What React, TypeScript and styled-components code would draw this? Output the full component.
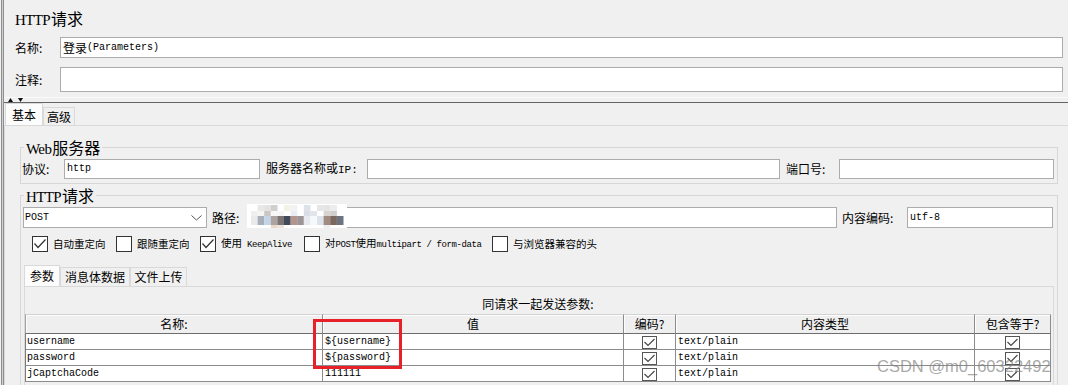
import React from "react";
import styled, { createGlobalStyle } from "styled-components";

const CJK = `"Noto Sans CJK SC", "Noto Sans", sans-serif`;
const MONO = `"Liberation Mono", "DejaVu Sans Mono", monospace`;
const SERIF = `"Liberation Serif", serif`;

const Global = createGlobalStyle`
  html, body { margin: 0; padding: 0; background: #f0f0f0; }
  body { font-family: ${CJK}; color: #000; }
  * { box-sizing: border-box; }
`;

const Page = styled.div`
  position: relative;
  width: 1068px;
  height: 385px;
  overflow: hidden;
  display: flex;
  background: #f0f0f0;
`;

const Gutter = styled.div`
  flex: none;
  margin-left: 1px;
  width: 3px;
  border-left: 1px solid #8f8f8f;
  border-right: 1px solid #8f8f8f;
  background: #cfcfcf;
`;

const Main = styled.div`
  flex: 1;
  min-width: 0;
  display: flex;
  flex-direction: column;
`;

const Header = styled.div`
  padding: 8px 5px 0 11px;
`;

const Title = styled.div`
  height: 20px;
  font-size: 16px;
  line-height: 20px;
`;

const SerifLatin = styled.span`
  font-family: ${SERIF};
  font-size: 15px;
  letter-spacing: -0.6px;
  margin-right: 1px;
`;

const Mono = styled.span<{ $size?: number; $ls?: number }>`
  font-family: ${MONO};
  font-size: ${(p) => p.$size ?? 10}px;
  letter-spacing: ${(p) => p.$ls ?? 0}px;
`;

const FieldRow = styled.div`
  display: flex;
  align-items: center;
  margin-top: 9px;
`;

const FieldLabel = styled.div`
  flex: none;
  width: 45px;
  font-size: 12px;
  line-height: 14px;
`;

const TextBox = styled.div<{ $h: number; $w?: number }>`
  position: relative;
  flex: ${(p) => (p.$w ? "none" : "1")};
  width: ${(p) => (p.$w ? `${p.$w}px` : "auto")};
  min-width: 0;
  height: ${(p) => p.$h}px;
  border: 1px solid #acacac;
  background: #fff;
  padding-left: 2px;
  display: flex;
  align-items: center;
  font-size: 12px;
  line-height: 14px;
  white-space: nowrap;
`;

const Splitter = styled.div`
  margin-top: 5px;
  height: 6px;
  border-top: 1px solid #fbfbfb;
  border-bottom: 1px solid #646464;
  padding-left: 4px;
  display: flex;
  align-items: center;
  gap: 5px;
`;

const TabStrip = styled.div<{ $h: number; $indent: number }>`
  display: flex;
  align-items: flex-end;
  height: ${(p) => p.$h}px;
  padding-left: ${(p) => p.$indent}px;
`;

const Tab = styled.div<{ $active?: boolean; $w: number; $h: number }>`
  flex: none;
  width: ${(p) => p.$w}px;
  height: ${(p) => p.$h}px;
  display: flex;
  align-items: center;
  justify-content: center;
  font-size: 12px;
  line-height: 14px;
  background: ${(p) => (p.$active ? "#fcfcfc" : "#f0f0f0")};
  border: 1px solid #d9d9d9;
  border-bottom: none;
`;

const TabPanel = styled.div`
  flex: 1;
  border-top: 1px solid #d9d9d9;
  border-left: 1px solid #d9d9d9;
  padding: 13px 10px 0 15px;
`;

const Group = styled.fieldset<{ $gap?: number }>`
  margin: ${(p) => p.$gap ?? 0}px 0 0 0;
  padding: 4px 3px 4px 1px;
  border: 1px solid #d7d7d7;
  min-width: 0;
`;

const Legend = styled.legend`
  margin-left: 2px;
  padding: 0 2px;
  font-size: 16px;
  line-height: 16px;
  height: 16px;
`;

const Row = styled.div<{ $h: number; $pl?: number }>`
  display: flex;
  align-items: center;
  height: ${(p) => p.$h}px;
  padding-left: ${(p) => p.$pl ?? 0}px;
  padding-right: ${(p) => (p.$pl ? 1 : 0)}px;
`;

const Label = styled.div<{ $w: number; $lead?: number }>`
  flex: none;
  width: ${(p) => p.$w}px;
  margin-left: ${(p) => p.$lead ?? 0}px;
  font-size: 12px;
  line-height: 14px;
  white-space: nowrap;
`;

const Combo = styled.div`
  flex: none;
  width: 184px;
  height: 21px;
  border: 1px solid #acacac;
  background: #fff;
  display: flex;
  align-items: center;
  justify-content: space-between;
  padding: 0 4px 0 1px;
`;

const CheckRow = styled.div`
  display: flex;
  align-items: center;
  height: 16px;
  margin-top: 8px;
  padding-left: 10px;
`;

const CheckItem = styled.div<{ $w?: number }>`
  flex: none;
  width: ${(p) => (p.$w ? `${p.$w}px` : "auto")};
  display: flex;
  align-items: center;
  gap: 5px;
  font-size: 10.5px;
  line-height: 14px;
  white-space: nowrap;
`;

const Box = styled.div`
  flex: none;
  width: 16px;
  height: 16px;
  border: 1px solid #333;
  background: #fff;
  display: flex;
  align-items: center;
  justify-content: center;
`;

const SubTabs = styled.div`
  margin-top: 13px;
`;

const SubPanel = styled.div`
  margin-left: 2px;
  border-top: 1px solid #d9d9d9;
  border-left: 1px solid #d9d9d9;
  border-right: 1px solid #d9d9d9;
  height: 120px;
`;

const Caption = styled.div`
  width: 1026px;
  height: 27px;
  padding-top: 8px;
  text-align: center;
  font-size: 12px;
  line-height: 17px;
`;

const Table = styled.table`
  width: 1026px;
  table-layout: fixed;
  border-collapse: separate;
  border-spacing: 0;
  background: #fff;
`;

const Th = styled.th`
  height: 20px;
  padding: 0;
  background: #efefef;
  font-weight: normal;
  font-size: 12px;
  line-height: 14px;
  border-top: 1px solid #d2d2d2;
  border-bottom: 1px solid #6e6e6e;
  border-right: 1px solid #8c8c8c;
  box-shadow: inset 1px 1px #fdfdfd;
  &:first-child {
    border-left: 1px solid #a0a0a0;
  }
`;

const Td = styled.td<{ $center?: boolean }>`
  height: 16px;
  padding: 0 2px;
  border-bottom: 1px solid #8c8c8c;
  border-right: 1px solid #8c8c8c;
  font-family: ${MONO};
  font-size: 10px;
  line-height: 15px;
  white-space: nowrap;
  overflow: hidden;
  vertical-align: top;
  text-align: ${(p) => (p.$center ? "center" : "left")};
  &:first-child {
    border-left: 1px solid #7a7a7a;
    padding-left: 1px;
  }
`;

const CellBox = styled.div`
  display: inline-flex;
  align-items: center;
  justify-content: center;
  width: 15px;
  height: 13px;
  margin-top: 2px;
  border: 1px solid #555;
  background: #fff;
  vertical-align: top;
`;

const Highlight = styled.div`
  position: absolute;
  left: 313px;
  top: 319px;
  width: 89px;
  height: 50px;
  border: 3px solid #e8202a;
  pointer-events: none;
`;

const Watermark = styled.div`
  position: absolute;
  left: 877px;
  top: 358px;
  font-family: "Liberation Sans", Arial, sans-serif;
  font-size: 16.5px;
  line-height: 16.5px;
  color: rgba(130, 130, 130, 0.7);
  white-space: nowrap;
  pointer-events: none;
`;

const MosaicWrap = styled.div`
  position: absolute;
  left: -2px;
  top: -4px;
  width: 100px;
  height: 24px;
`;

const Arrow = ({ up }: { up?: boolean }) => (
  <svg width="5" height="4" viewBox="0 0 5 4">
    <polygon points={up ? "0,4 2.5,0 5,4" : "0,0 5,0 2.5,4"} fill="#111" />
  </svg>
);

const Chevron = () => (
  <svg width="11" height="6" viewBox="0 0 11 6">
    <polyline points="0.5,0.5 5.5,5 10.5,0.5" fill="none" stroke="#555" strokeWidth="1" />
  </svg>
);

const BigCheck = () => (
  <svg width="14" height="14" viewBox="0 0 14 14">
    <polyline points="1.5,6.5 5,10.5 12.5,2.5" fill="none" stroke="#333" strokeWidth="1.2" />
  </svg>
);

const SmallCheck = () => (
  <svg width="13" height="11" viewBox="0 0 13 11">
    <polyline points="1.5,5 5,8.5 11.5,2" fill="none" stroke="#444" strokeWidth="1.1" />
  </svg>
);

const mosaicRows: { y: number; h: number; cells: (string | null)[] }[] = [
  { y: 1, h: 6, cells: [null, "#e8e8e8", "#e2e2e2", "#cfcfcf", null, "#f4f2e4", "#f2f2f2", null, "#dde1ea", null, "#e6e6e6", "#e4e4e4", "#ececec", null] },
  { y: 7, h: 5, cells: ["#efefef", "#f4f4f4", "#c9c6c4", "#f8f8f8", "#f6f6f6", null, "#e9edf3", null, "#d8dde6", "#e2e6ec", null, "#d9d4cf", "#cfcfcf", null] },
  { y: 12, h: 9, cells: ["#eaeaea", "#a8afbb", "#c3d4e6", "#aca59f", "#7b7472", "#3f4b5b", "#b3958e", "#9b9597", "#e6e9ee", "#f6f9fc", "#dde3ea", "#a08a82", "#7c695d", "#6e7380"] },
  { y: 21, h: 3, cells: [null, null, null, "#e9d9cc", "#ece4dc", null, null, null, null, null, null, "#eeeeee", null, null] },
];

const Mosaic = () => (
  <MosaicWrap>
    <svg width="100" height="24" viewBox="0 0 100 24">
      <rect x="0" y="0" width="100" height="24" fill="#ffffff" />
      {mosaicRows.map((r, ri) =>
        r.cells.map((c, ci) =>
          c ? <rect key={`${ri}-${ci}`} x={4 + ci * 6.6} y={r.y} width="6.7" height={r.h} fill={c} /> : null
        )
      )}
    </svg>
  </MosaicWrap>
);

const rows = [
  { name: "username", value: "${username}" },
  { name: "password", value: "${password}" },
  { name: "jCaptchaCode", value: "111111" },
];

export default function App() {
  return (
    <>
      <Global />
      <Page>
        <Gutter />
        <Main>
          <Header>
            <Title>
              <SerifLatin>HTTP</SerifLatin>请求
            </Title>
            <FieldRow>
              <FieldLabel>名称:</FieldLabel>
              <TextBox $h={21}>
                登录<Mono>(Parameters)</Mono>
              </TextBox>
            </FieldRow>
            <FieldRow>
              <FieldLabel>注释:</FieldLabel>
              <TextBox $h={25} />
            </FieldRow>
          </Header>
          <Splitter>
            <Arrow up />
            <Arrow />
          </Splitter>
          <TabStrip $h={22} $indent={1}>
            <Tab $active $w={38} $h={22}>基本</Tab>
            <Tab $w={32} $h={18}>高级</Tab>
          </TabStrip>
          <TabPanel>
            <Group>
              <Legend>
                <SerifLatin>Web</SerifLatin>服务器
              </Legend>
              <Row $h={20}>
                <Label $w={42}>协议:</Label>
                <TextBox $h={20} $w={196}>
                  <Mono>http</Mono>
                </TextBox>
                <Label $w={101} $lead={6}>
                  服务器名称或<Mono $size={11}>IP:</Mono>
                </Label>
                <TextBox $h={20} />
                <Label $w={53} $lead={6}>端口号:</Label>
                <TextBox $h={20} $w={215} />
              </Row>
            </Group>
            <Group $gap={3}>
              <Legend>
                <SerifLatin>HTTP</SerifLatin>请求
              </Legend>
              <Row $h={21} $pl={1}>
                <Combo>
                  <Mono>POST</Mono>
                  <Chevron />
                </Combo>
                <Label $w={36} $lead={5}>路径:</Label>
                <TextBox $h={21}>
                  <Mosaic />
                </TextBox>
                <Label $w={65} $lead={5}>内容编码:</Label>
                <TextBox $h={21} $w={146}>
                  <Mono>utf-8</Mono>
                </TextBox>
              </Row>
              <CheckRow>
                <CheckItem $w={84}>
                  <Box><BigCheck /></Box>自动重定向
                </CheckItem>
                <CheckItem $w={84}>
                  <Box />跟随重定向
                </CheckItem>
                <CheckItem $w={104}>
                  <Box><BigCheck /></Box>
                  <span>
                    使用<Mono $size={9} $ls={-0.4}> KeepAlive</Mono>
                  </span>
                </CheckItem>
                <CheckItem $w={188}>
                  <Box />
                  <span>
                    对<Mono $size={9} $ls={-0.4}>POST</Mono>使用<Mono $size={9} $ls={-0.4}>multipart / form-data</Mono>
                  </span>
                </CheckItem>
                <CheckItem>
                  <Box />与浏览器兼容的头
                </CheckItem>
              </CheckRow>
              <SubTabs>
                <TabStrip $h={21} $indent={2}>
                  <Tab $active $w={36} $h={21}>参数</Tab>
                  <Tab $w={70} $h={19}>消息体数据</Tab>
                  <Tab $w={57} $h={19}>文件上传</Tab>
                </TabStrip>
                <SubPanel>
                  <Caption>同请求一起发送参数:</Caption>
                  <Table>
                    <colgroup>
                      <col style={{ width: 298 }} />
                      <col style={{ width: 301 }} />
                      <col style={{ width: 52 }} />
                      <col style={{ width: 299 }} />
                      <col style={{ width: 76 }} />
                    </colgroup>
                    <thead>
                      <tr>
                        <Th>名称:</Th>
                        <Th>值</Th>
                        <Th>编码?</Th>
                        <Th>内容类型</Th>
                        <Th>包含等于?</Th>
                      </tr>
                    </thead>
                    <tbody>
                      {rows.map((r) => (
                        <tr key={r.name}>
                          <Td>{r.name}</Td>
                          <Td>{r.value}</Td>
                          <Td $center>
                            <CellBox><SmallCheck /></CellBox>
                          </Td>
                          <Td>text/plain</Td>
                          <Td $center>
                            <CellBox><SmallCheck /></CellBox>
                          </Td>
                        </tr>
                      ))}
                    </tbody>
                  </Table>
                </SubPanel>
              </SubTabs>
            </Group>
          </TabPanel>
        </Main>
        <Highlight />
        <Watermark>CSDN @m0_60322492</Watermark>
      </Page>
    </>
  );
}
